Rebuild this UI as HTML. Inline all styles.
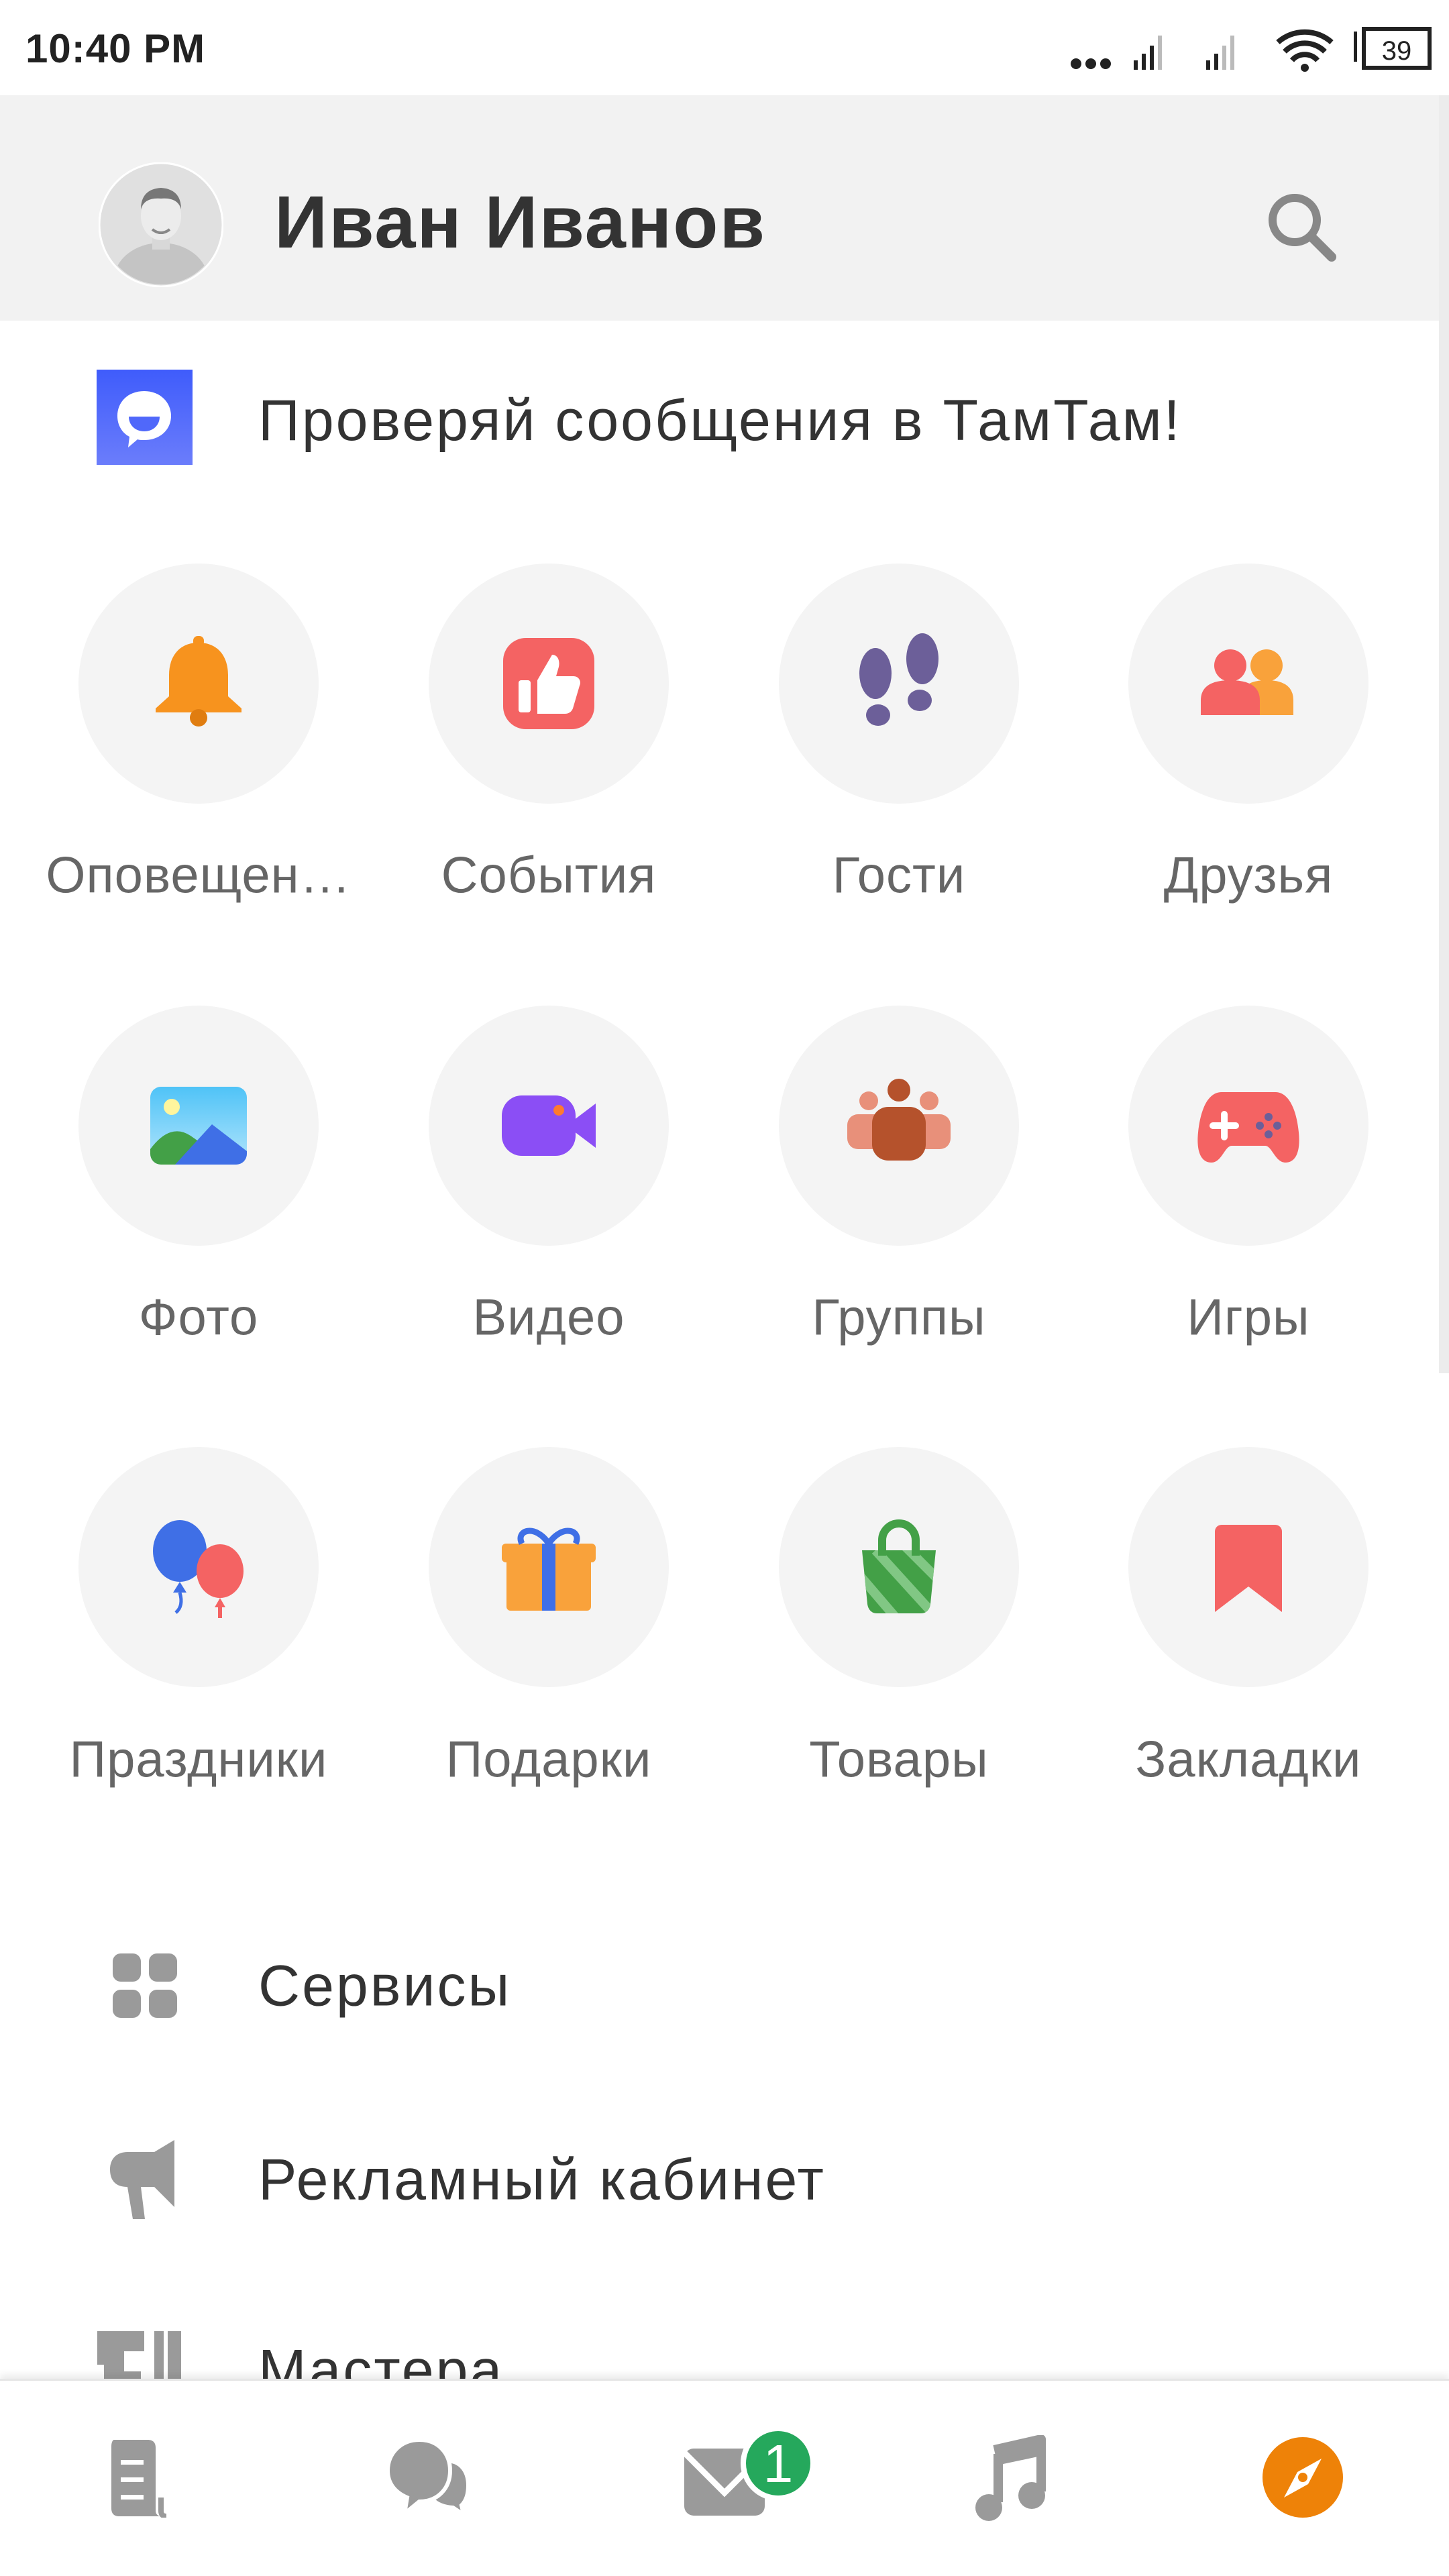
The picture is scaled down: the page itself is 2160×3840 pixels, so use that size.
<!DOCTYPE html>
<html><head><meta charset="utf-8"><style>
*{margin:0;padding:0;box-sizing:border-box}
body{width:2160px;height:3840px;overflow:hidden;background:#fff;font-family:"Liberation Sans","DejaVu Sans",sans-serif;position:relative}
.a{position:absolute}
.circ{position:absolute;width:358px;height:358px;border-radius:50%;background:#f4f4f4;display:flex;align-items:center;justify-content:center}
.lbl{position:absolute;width:520px;text-align:center;font-size:76px;letter-spacing:1px;color:#666;white-space:nowrap;transform:translateY(-50%)}
.li{position:absolute;left:385px;font-size:86px;letter-spacing:3px;color:#333;transform:translateY(-50%)}
</style></head><body>
<!-- status bar -->
<div class="a" style="left:38px;top:38px;font-size:60px;font-weight:bold;letter-spacing:1px;color:#222">10:40 PM</div>
<svg class="a" style="left:1590px;top:35px" width="560" height="75" viewBox="0 0 560 75">
<circle cx="14" cy="60" r="8" fill="#222"/><circle cx="36" cy="60" r="8" fill="#222"/><circle cx="58" cy="60" r="8" fill="#222"/>
<rect x="100" y="55" width="6" height="14" fill="#222"/><rect x="112" y="45" width="6" height="24" fill="#222"/><rect x="124" y="33" width="6" height="36" fill="#222"/><rect x="136" y="18" width="6" height="51" fill="#bbb"/>
<rect x="208" y="55" width="6" height="14" fill="#222"/><rect x="220" y="45" width="6" height="24" fill="#222"/><rect x="232" y="33" width="6" height="36" fill="#bbb"/><rect x="244" y="18" width="6" height="51" fill="#bbb"/>
<path d="M315 28a60 60 0 0 1 80 0" stroke="#222" stroke-width="8" fill="none"/><path d="M325 42a42 42 0 0 1 60 0" stroke="#222" stroke-width="8" fill="none"/><path d="M336 55a25 25 0 0 1 38 0" stroke="#222" stroke-width="8" fill="none"/><circle cx="355" cy="66" r="6" fill="#222"/>
<rect x="428" y="12" width="5" height="45" fill="#222"/><rect x="443" y="8" width="98" height="58" fill="none" stroke="#222" stroke-width="6"/>
<text x="492" y="54" font-size="40" text-anchor="middle" fill="#222" font-family="Liberation Sans">39</text>
</svg>
<!-- header -->
<div class="a" style="left:0;top:142px;width:2145px;height:336px;background:#f2f2f2"></div>
<div class="a" style="left:2145px;top:142px;width:15px;height:1905px;background:#ececec"></div>
<svg class="a" style="left:147px;top:242px" width="186" height="186" viewBox="0 0 186 186">
<circle cx="93" cy="93" r="92" fill="#e0e0e0" stroke="#fff" stroke-width="3"/>
<clipPath id="cp"><circle cx="93" cy="93" r="89"/></clipPath>
<g clip-path="url(#cp)"><ellipse cx="93" cy="175" rx="70" ry="55" fill="#c4c4c4"/><rect x="80" y="100" width="26" height="30" fill="#d8d8d8"/><ellipse cx="93" cy="80" rx="30" ry="36" fill="#ececec"/><path d="M63 70q0-30 30-32q30 2 30 32q-5-18-30-16q-25-2-30 16z" fill="#777"/><path d="M80 100q13 10 26 0" stroke="#888" stroke-width="4" fill="none"/></g>
</svg>
<div class="a" style="left:409px;top:268px;font-size:110px;letter-spacing:2px;font-weight:bold;color:#333">Иван Иванов</div>
<svg class="a" style="left:1880px;top:278px" width="120" height="120" viewBox="0 0 120 120"><circle cx="50" cy="50" r="33" stroke="#888" stroke-width="12" fill="none"/><path d="M75 75l30 30" stroke="#888" stroke-width="14" stroke-linecap="round"/></svg>
<!-- tamtam -->
<svg class="a" style="left:144px;top:551px" width="143" height="142" viewBox="0 0 143 142"><defs><linearGradient id="tg" x1="0" y1="0" x2="0" y2="1"><stop offset="0" stop-color="#3f5cfb"/><stop offset="1" stop-color="#6b7dfb"/></linearGradient></defs><rect width="143" height="142" fill="url(#tg)"/><path d="M71 32c-25 0-40 17-40 37 0 15 8 26 18 31l-2 16 14-12c3 1 6 1 10 1 24 0 40-16 40-36s-16-37-40-37z" fill="#fff"/><path d="M48 70h46c0 14-11 22-23 22s-23-8-23-22z" fill="#5068fa"/></svg>
<div class="a" style="left:385px;top:578px;font-size:86px;letter-spacing:3px;color:#333">Проверяй сообщения в ТамТам!</div>

<!-- grid row1 -->
<div class="circ" style="left:117px;top:840px"><svg width="150" height="150" viewBox="0 0 150 150"><path d="M75 14c-30 0-44 22-44 48v32l-20 18v6h128v-6l-20-18V62c0-26-14-48-44-48z" fill="#f7931e"/><rect x="67" y="4" width="16" height="16" rx="7" fill="#f7931e"/><circle cx="75" cy="126" r="13" fill="#e07d10"/></svg></div>
<div class="circ" style="left:639px;top:840px"><svg width="150" height="150" viewBox="0 0 150 150"><rect x="7" y="7" width="136" height="136" rx="34" fill="#f46363"/><rect x="30" y="70" width="18" height="48" rx="4" fill="#fff"/><path d="M58 70l22-38c8 0 12 8 10 18l-4 14h26c8 0 12 8 9 14l-10 34c-2 5-6 8-12 8H58z" fill="#fff"/></svg></div>
<div class="circ" style="left:1161px;top:840px"><svg width="150" height="150" viewBox="0 0 150 150"><ellipse cx="40" cy="60" rx="24" ry="38" fill="#6c5f99"/><ellipse cx="44" cy="122" rx="18" ry="16" fill="#6c5f99"/><ellipse cx="110" cy="38" rx="24" ry="38" fill="#6c5f99"/><ellipse cx="106" cy="100" rx="18" ry="16" fill="#6c5f99"/></svg></div>
<div class="circ" style="left:1682px;top:840px"><svg width="170" height="150" viewBox="0 0 170 150"><circle cx="58" cy="48" r="24" fill="#f46363"/><circle cx="112" cy="48" r="24" fill="#f9a23b"/><path d="M72 100q0-30 40-30t40 30v22H72z" fill="#f9a23b"/><path d="M14 100q0-30 44-30t44 30v22H14z" fill="#f46363"/></svg></div>
<div class="lbl" style="left:36px;top:1305px">Оповещен…</div>
<div class="lbl" style="left:558px;top:1305px">События</div>
<div class="lbl" style="left:1080px;top:1305px">Гости</div>
<div class="lbl" style="left:1601px;top:1305px">Друзья</div>

<!-- row2 -->
<div class="circ" style="left:117px;top:1499px"><svg width="150" height="150" viewBox="0 0 150 150"><defs><linearGradient id="sk" x1="0" y1="0" x2="0" y2="1"><stop offset="0" stop-color="#4fc3f7"/><stop offset="1" stop-color="#b3e5fc"/></linearGradient></defs><rect x="3" y="17" width="144" height="116" rx="16" fill="url(#sk)"/><circle cx="35" cy="47" r="12" fill="#fff59d"/><path d="M3 110q30-40 60-20l20 14 4 29H19a16 16 0 0 1-16-16z" fill="#43a047"/><path d="M40 133l55-60 52 40v4a16 16 0 0 1-16 16z" fill="#3f6fe6"/></svg></div>
<div class="circ" style="left:639px;top:1499px"><svg width="150" height="150" viewBox="0 0 150 150"><rect x="5" y="30" width="110" height="90" rx="30" fill="#8b4ef5"/><path d="M108 70l37-28v66l-37-28z" fill="#8b4ef5"/><circle cx="90" cy="52" r="8" fill="#ff7a2f"/></svg></div>
<div class="circ" style="left:1161px;top:1499px"><svg width="170" height="150" viewBox="0 0 170 150"><circle cx="40" cy="38" r="14" fill="#e8907a"/><circle cx="130" cy="38" r="14" fill="#e8907a"/><rect x="8" y="58" width="64" height="52" rx="16" fill="#e8907a"/><rect x="98" y="58" width="64" height="52" rx="16" fill="#e8907a"/><circle cx="85" cy="22" r="17" fill="#b5522c"/><rect x="45" y="47" width="80" height="80" rx="24" fill="#b5522c"/></svg></div>
<div class="circ" style="left:1682px;top:1499px"><svg width="160" height="150" viewBox="0 0 160 150"><path d="M40 25h80c22 0 32 30 35 60s-5 45-20 45-20-25-30-25H55c-10 0-15 25-30 25S2 115 5 85 18 25 40 25z" fill="#f46363"/><path d="M44 58v34M27 75h34" stroke="#fff" stroke-width="10" stroke-linecap="round"/><circle cx="110" cy="62" r="6" fill="#6c5f99"/><circle cx="110" cy="88" r="6" fill="#6c5f99"/><circle cx="97" cy="75" r="6" fill="#6c5f99"/><circle cx="123" cy="75" r="6" fill="#6c5f99"/></svg></div>
<div class="lbl" style="left:36px;top:1964px">Фото</div>
<div class="lbl" style="left:558px;top:1964px">Видео</div>
<div class="lbl" style="left:1080px;top:1964px">Группы</div>
<div class="lbl" style="left:1601px;top:1964px">Игры</div>

<!-- row3 -->
<div class="circ" style="left:117px;top:2157px"><svg width="160" height="160" viewBox="0 0 160 160"><ellipse cx="52" cy="56" rx="40" ry="46" fill="#3f6fe6"/><path d="M52 102l-10 16h20z" fill="#3f6fe6"/><path d="M52 118q6 20-6 30" stroke="#3f6fe6" stroke-width="5" fill="none"/><ellipse cx="112" cy="86" rx="35" ry="40" fill="#f46363"/><path d="M112 126l-8 14h16z" fill="#f46363"/><path d="M112 140v16" stroke="#f46363" stroke-width="6"/></svg></div>
<div class="circ" style="left:639px;top:2157px"><svg width="150" height="150" viewBox="0 0 150 150"><rect x="12" y="60" width="126" height="80" rx="6" fill="#f9a23b"/><rect x="5" y="40" width="140" height="28" rx="6" fill="#f9a23b"/><rect x="65" y="40" width="20" height="100" fill="#3f6fe6"/><path d="M75 40c-20-30-50-20-40 0M75 40c20-30 50-20 40 0" stroke="#3f6fe6" stroke-width="9" fill="none"/></svg></div>
<div class="circ" style="left:1161px;top:2157px"><svg width="150" height="150" viewBox="0 0 150 150"><clipPath id="bg"><path d="M20 50h110l-8 80c-1 8-6 14-14 14H42c-8 0-13-6-14-14z"/></clipPath><g clip-path="url(#bg)"><rect x="0" y="40" width="150" height="110" fill="#43a047"/><path d="M10 80l60 70M40 50l100 110M80 40l80 80M0 120l30 40" stroke="#81c784" stroke-width="14"/></g><path d="M50 58V35a25 25 0 0 1 50 0v23" stroke="#43a047" stroke-width="12" fill="none"/></svg></div>
<div class="circ" style="left:1682px;top:2157px"><svg width="150" height="150" viewBox="0 0 150 150"><path d="M35 12h80a10 10 0 0 1 10 10v120l-50-38-50 38V22a10 10 0 0 1 10-10z" fill="#f46363"/></svg></div>
<div class="lbl" style="left:36px;top:2623px">Праздники</div>
<div class="lbl" style="left:558px;top:2623px">Подарки</div>
<div class="lbl" style="left:1080px;top:2623px">Товары</div>
<div class="lbl" style="left:1601px;top:2623px">Закладки</div>

<!-- list -->
<svg class="a" style="left:166px;top:2910px" width="100" height="100" viewBox="0 0 100 100"><g fill="#9a9a9a"><rect x="2" y="2" width="42" height="42" rx="12"/><rect x="56" y="2" width="42" height="42" rx="12"/><rect x="2" y="56" width="42" height="42" rx="12"/><rect x="56" y="56" width="42" height="42" rx="12"/></g></svg>
<div class="li" style="top:2961px">Сервисы</div>
<svg class="a" style="left:160px;top:3190px" width="110" height="120" viewBox="0 0 110 120"><path d="M100 0v100l-30-30H50l6 48H38l-8-48C12 70 4 60 4 44s10-26 26-26h40z" fill="#9a9a9a"/></svg>
<div class="li" style="top:3250px">Рекламный кабинет</div>
<svg class="a" style="left:145px;top:3475px" width="135" height="80" viewBox="0 0 135 80"><path d="M0 0h70v30H40v30h25v20H10V50H0z" fill="#9a9a9a"/><rect x="85" y="0" width="14" height="80" fill="#9a9a9a"/><rect x="105" y="0" width="20" height="80" fill="#9a9a9a"/></svg>
<div class="li" style="top:3534px">Мастера</div>

<!-- bottom nav -->
<div class="a" style="left:0;top:3546px;width:2160px;height:294px;background:#fff;box-shadow:0 -6px 10px rgba(0,0,0,0.08);border-top:3px solid #e6e6e6"></div>
<svg class="a" style="left:160px;top:3633px" width="120" height="120" viewBox="0 0 120 120"><path d="M10 4h50c8 0 12 4 12 12v94c0 5 4 8 8 8H18c-8 0-12-4-12-12V14c0-6 2-10 4-10z" fill="#9a9a9a"/><path d="M80 90v20q0 8 8 8" stroke="#9a9a9a" stroke-width="8" fill="none"/><rect x="20" y="34" width="34" height="7" fill="#fff"/><rect x="20" y="60" width="34" height="7" fill="#fff"/><rect x="20" y="86" width="34" height="7" fill="#fff"/></svg>
<svg class="a" style="left:570px;top:3633px" width="150" height="120" viewBox="0 0 150 120"><path d="M95 34c22 0 34 16 34 38 0 14-4 24-10 30l4 16-18-12c-30-2-40-20-40-34 0-22 10-38 30-38z" fill="#9a9a9a" stroke="#fff" stroke-width="8"/><path d="M55 4c28 0 46 20 46 46s-18 46-46 46l-22 18 4-24C18 82 8 68 8 50 8 24 28 4 55 4z" fill="#9a9a9a" stroke="#fff" stroke-width="6"/></svg>
<svg class="a" style="left:1010px;top:3610px" width="210" height="150" viewBox="0 0 210 150"><rect x="10" y="40" width="120" height="100" rx="14" fill="#9a9a9a"/><path d="M10 46l60 60 60-60" stroke="#fff" stroke-width="9" fill="none"/><circle cx="150" cy="62" r="52" fill="#25a85c" stroke="#fff" stroke-width="8"/><text x="150" y="90" font-size="80" fill="#fff" text-anchor="middle" font-family="Liberation Sans">1</text></svg>
<svg class="a" style="left:1448px;top:3630px" width="120" height="135" viewBox="0 0 120 135"><path d="M40 28v72" stroke="#9a9a9a" stroke-width="14"/><path d="M34 22l70-16v78" stroke="#9a9a9a" stroke-width="14" fill="none" stroke-linejoin="round"/><path d="M38 20l66-14v25l-66 14z" fill="#9a9a9a"/><ellipse cx="26" cy="108" rx="20" ry="20" fill="#9a9a9a"/><ellipse cx="90" cy="90" rx="20" ry="20" fill="#9a9a9a"/></svg>
<svg class="a" style="left:1880px;top:3631px" width="124" height="124" viewBox="0 0 124 124"><circle cx="62" cy="62" r="60" fill="#ee8208"/><path d="M90 34L70 72 34 92l20-38z" fill="#fff"/><circle cx="62" cy="62" r="7" fill="#ee8208"/></svg>
</body></html>
